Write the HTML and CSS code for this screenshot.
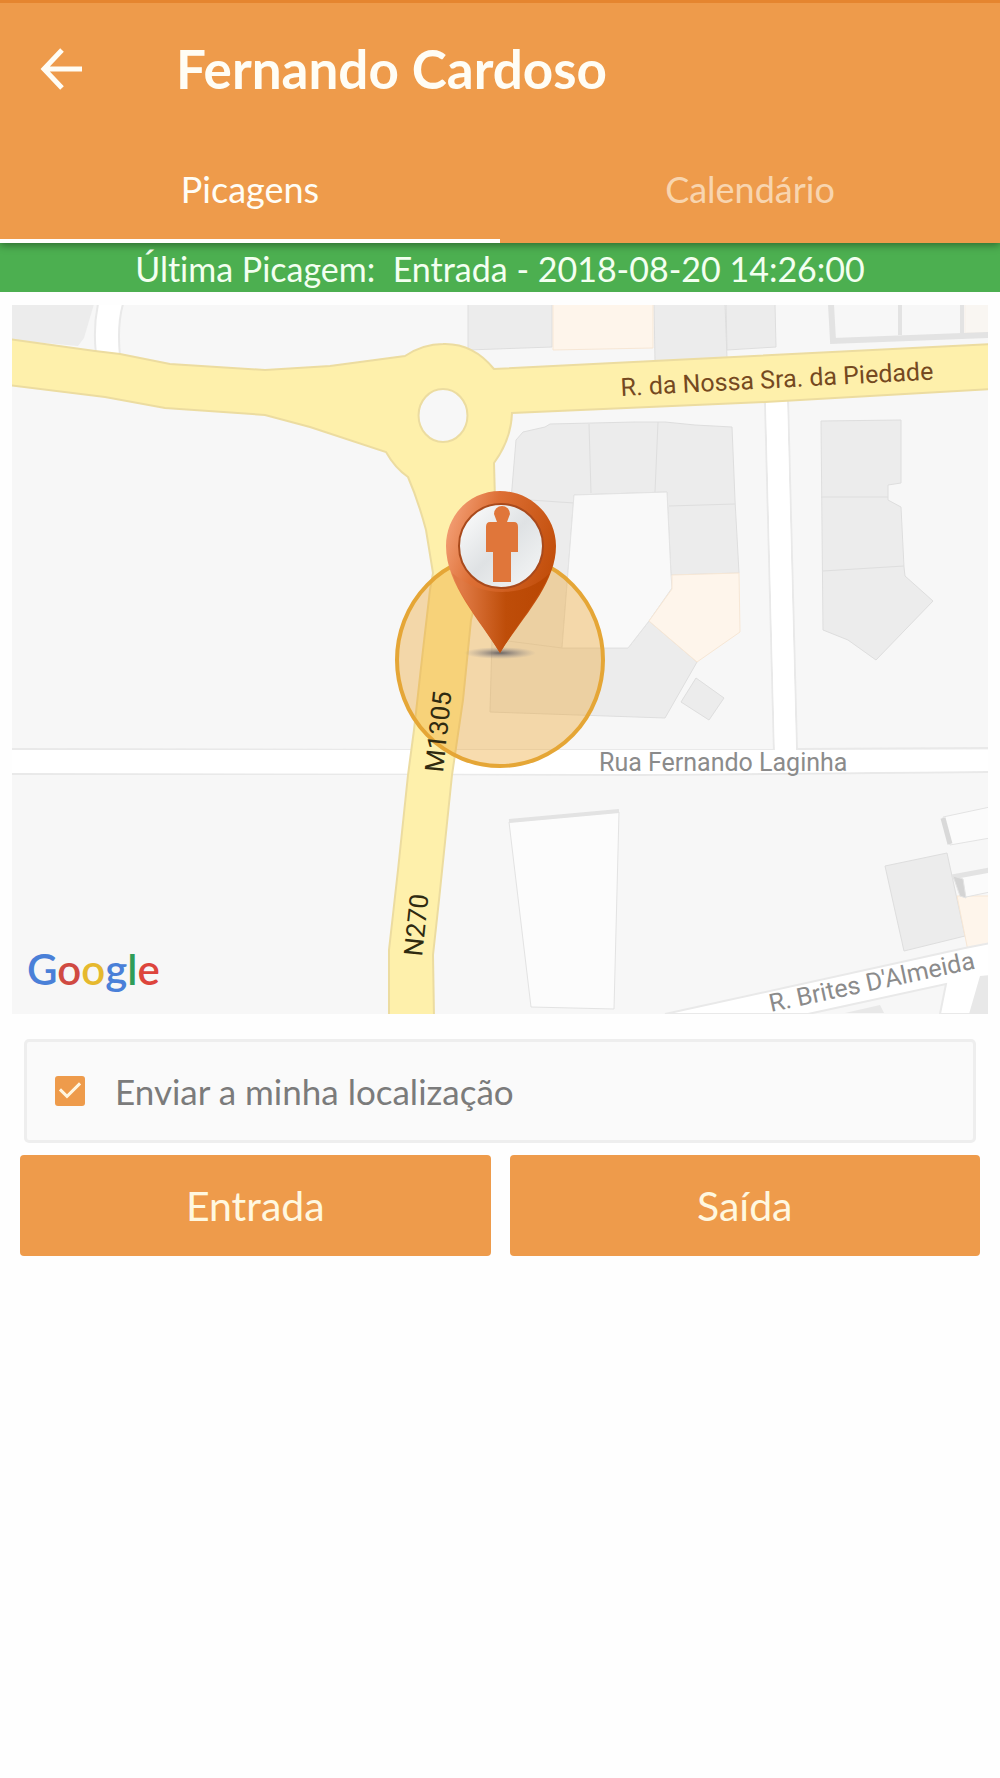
FILE: index.html
```html
<!DOCTYPE html>
<html lang="pt">
<head>
<meta charset="utf-8">
<meta name="viewport" content="width=device-width, initial-scale=1">
<title>Fernando Cardoso</title>
<link rel="stylesheet" href="styles.css">
</head>
<body>
<header class="app-header">
  <div class="title-bar">
    <button class="back" type="button" aria-label="Voltar">
      <svg viewBox="0 0 44 44" fill="none" stroke="currentColor" stroke-width="5"><path d="M42 22H5M22 3 4 22l18 19"/></svg>
    </button>
    <h1 class="title">Fernando Cardoso</h1>
  </div>
  <nav class="tabs">
    <a class="tab tab-active" href="#picagens">Picagens</a>
    <a class="tab" href="#calendario">Calendário</a>
  </nav>
</header>
<main id="picagens">
  <p class="status">Última Picagem:&nbsp; Entrada - 2018-08-20 14:26:00</p>
  <section class="map">
    <svg class="map-canvas" viewBox="12 305 976 709" role="img" aria-label="Mapa">
      <defs>
        <linearGradient id="rim" x1="0" y1="0" x2="1" y2="0.5">
          <stop offset="0" stop-color="#f9ab86"/><stop offset="0.4" stop-color="#dd6f35"/><stop offset="1" stop-color="#c04c08"/>
        </linearGradient>
        <linearGradient id="cone" x1="0" y1="0" x2="1" y2="0">
          <stop offset="0.1" stop-color="#e07a45"/><stop offset="0.55" stop-color="#be4d09"/><stop offset="1" stop-color="#b94602"/>
        </linearGradient>
        <linearGradient id="glass" x1="0" y1="0" x2="1" y2="1">
          <stop offset="0" stop-color="#ffffff"/><stop offset="0.5" stop-color="#dfe2e4"/><stop offset="1" stop-color="#f7f8f8"/>
        </linearGradient>
        <radialGradient id="shade">
          <stop offset="0" stop-color="#4b4a55" stop-opacity="0.8"/><stop offset="1" stop-color="#8a8a95" stop-opacity="0"/>
        </radialGradient>
      </defs>
      <rect x="12" y="305" width="976" height="709" fill="#f7f7f7"/>

      <g class="building">
        <path d="M12 304H94L84 338 78 346 12 340Z" stroke="none"/>
        <path d="M468 304H552V347L468 350Z"/>
        <path d="M654 304H725L727 358 655 361Z"/>
        <path d="M726 304H775L776 347 727 350Z"/>
        <path d="M516 440 523 432 545 427 550 424 635 422 665 422 695 425 732 427 735 500 739 573 671 575 667 492 574 495 562 648 628 648 649 621 697 662 665 718 490 712 492 640 506 560Z"/>
        <path d="M589 424 591 493M658 422 655 492M669 506 735 504M530 500 574 503M500 640 562 648" fill="none"/>
        <path d="M696 678 724 698 709 720 681 702Z"/>
        <path d="M821 421 901 420V483L888 485V500L901 507 904 567 905 576 933 601 876 660 848 640 823 630Z"/>
        <path d="M821 497H888M823 571 904 566" fill="none"/>
        <path d="M885 866 947 853 965 936 904 951Z"/>
      </g>
      <path d="M574 495 667 492 671 575 672 588 649 621 628 648H562Z" fill="#f9f9f9" stroke="#e3e3e3"/>
      <g class="shop">
        <path d="M553 304H653V348L553 350Z"/>
        <path d="M672 575 739 573 740 632 697 662 649 621 672 589Z"/>
        <path d="M957 896 990 896 990 951 969 956Z"/>
        <path d="M965 304H990V333H965Z" opacity="0.4"/>
      </g>
      <g fill="none" stroke="#e3e3e3">
        <path d="M831 304 833 341 990 335" stroke-width="6"/>
        <path d="M900 304V335M962 304V333" stroke-width="4"/>
      </g>
      <g fill="#fbfbfb" stroke="#e3e3e3">
        <path d="M509 822 619 812 614 1009 531 1007Z" fill="#fcfcfc"/>
        <path d="M509 821 619 811" stroke-width="4"/>
        <path d="M943 817 990 807V838L950 845Z"/>
        <path d="M943 818 950 844" stroke="#d9d9d9" stroke-width="5"/>
        <path d="M952 876 990 869V892L966 897Z"/>
        <path d="M952 877 990 870" stroke-width="5"/>
        <path d="M953 876 963 879 966 898 960 896Z" fill="#d4d4d4"/>
      </g>

      <g class="street">
        <path d="M98 304Q93 328 96 354L120 356Q117 325 123 304Z"/>
        <path d="M765 400 774 752H797L788 400Z"/>
        <path d="M665 1014 965 948 990 943V1014H940L946 984 808 1014Z"/>
        <path d="M10 749 412 750 774 750M797 749 990 748M10 774 412 774 640 775 990 772"/>
      </g>
      <path d="M10 750H990V771L640 774 10 773Z" fill="#fff"/>
      <path d="M766 400 775 753H796L787 400Z" fill="#fff"/>
      <path d="M969 955 990 950V974L978 976Z" fill="#fff"/>
      <path d="M980 976 990 975V1014H969Z" fill="#e8e8e8"/>
      <path d="M845 1013 880 1005 884 1013Z" fill="#e8e8e8"/>

      <path class="main-road" fill-rule="evenodd" d="M8 339 95 351 120 354 170 364 265 370 330 366 405 356Q423 344 443 344 473 343 494 369L992 344V389L765 402 512 413Q511 440 494 463L495 500 488 550 471 620 463 700 452 775 439 900 433 955 434 1018H389V950L398 870 408 775 414 730 423 650 430 590 433 573 426 530Q418 500 408 477 395 468 386 452L310 427 265 415 165 408 105 397 8 385ZM443 389A24 26 0 1 0 443 442 24 26 0 1 0 443 389Z"/>

      <g class="label">
        <text class="label-main" transform="translate(621 396) rotate(-3)">R. da Nossa Sra. da Piedade</text>
        <text x="599" y="771">Rua Fernando Laginha</text>
        <text transform="translate(771 1012) rotate(-12)">R. Brites D'Almeida</text>
        <text class="label-road" transform="translate(422 957) rotate(-84)">N270</text>
      </g>
      <ellipse cx="500" cy="660" rx="103" ry="106" fill="#eda022" fill-opacity="0.37" stroke="#e5a636" stroke-width="4"/>
      <text class="label label-road" transform="translate(443 773) rotate(-84)">M1305</text>

      <ellipse cx="500" cy="653" rx="36" ry="6" fill="url(#shade)"/>
      <path d="M500 491C530 491 556 515 556 546 556 585 520 620 500 653 480 620 446 585 446 546 446 515 470 491 500 491Z" fill="url(#rim)"/>
      <path d="M452 573Q475 592 502 592 530 592 550 573C537 602 516 626 500 653 484 626 463 602 452 573Z" fill="url(#cone)"/>
      <circle cx="501" cy="546" r="42" fill="url(#glass)" stroke="#a94a1c" stroke-width="2"/>
      <path d="M494 514A8 8 0 0 1 510 514L507 522H514Q518 522 518 527V552H511V582H493V552H486V527Q486 522 490 522H497Z" fill="#e0763a"/>

      <text class="logo" x="27" y="985"><tspan fill="#4a80d8">G</tspan><tspan fill="#d04a42">o</tspan><tspan fill="#e6b92e">o</tspan><tspan fill="#4a80d8">g</tspan><tspan fill="#2f9d58">l</tspan><tspan fill="#dd453c">e</tspan></text>
    </svg>
  </section>
  <form class="controls">
    <label class="consent">
      <input class="tick" type="checkbox" checked>
      <span>Enviar a minha localização</span>
    </label>
    <div class="actions">
      <button class="action" type="button">Entrada</button>
      <button class="action" type="button">Saída</button>
    </div>
  </form>
</main>
</body>
</html>
```
FILE: styles.css
```css
* { box-sizing: border-box; }

body {
  margin: 0;
  background: #fefefe;
  font-family: Lato, "Noto Sans", sans-serif;
  font-size: 36px;
  font-variant-ligatures: none;
  line-height: 44px;
}

.app-header {
  position: relative;
  background: #ee9b4b;
  border-top: 3px solid #e5852f;
  color: #fffdf5;
  box-shadow: 0 2px 8px rgba(0, 0, 0, 0.4);
}

.title-bar {
  display: flex;
  align-items: center;
  height: 132px;
  padding: 0 40px;
  gap: 92px;
}

.back {
  width: 44px;
  height: 44px;
  padding: 0;
  border: 0;
  background: none;
  color: inherit;
}

.back svg { display: block; }

.title {
  margin: 0;
  font-size: 53px;
  line-height: 64px;
  font-weight: 700;
}

.tabs { display: grid; grid-template-columns: 1fr 1fr; }

.tab {
  height: 108px;
  padding-top: 32px;
  border-bottom: 4px solid transparent;
  color: rgba(255, 253, 245, 0.6);
  text-align: center;
  text-decoration: none;
}

.tab-active {
  color: #fffdf5;
  border-color: #fff;
}

.status {
  margin: 0;
  padding: 4px 0 1px;
  background: #4caf50;
  color: #f3fff0;
  font-size: 34px;
  text-align: center;
}

.map { padding: 13px 12px 0; }

.map-canvas {
  display: block;
  width: 100%;
}

.building { fill: #ececec; stroke: #dedede; }
.shop { fill: #fef5eb; stroke: #f7e7d5; }
.street { fill: #fff; stroke: #e9e9e9; stroke-width: 2px; }
.main-road { fill: #fef0ab; stroke: #ecdca0; stroke-width: 2px; }

.label {
  font-family: Roboto, sans-serif;
  font-size: 25px;
  fill: #8b8b8b;
}

.label-main { fill: #75491f; }
.label-road { font-size: 26px; fill: #2f2a10; }

.logo {
  font-family: Lato, sans-serif;
  font-size: 42px;
  font-weight: 600;
}

.controls { padding: 25px 20px 0; }

.consent {
  display: flex;
  align-items: center;
  gap: 30px;
  height: 104px;
  margin: 0 4px 12px;
  padding: 0 28px;
  border: 3px solid #eee;
  border-radius: 5px;
  background: #fafafa;
  color: #7b7b7b;
  font-size: 35px;
}

.tick {
  appearance: none;
  width: 30px;
  height: 30px;
  margin: 0;
  border-radius: 3px;
  background: #ee9b4b;
}

.tick:checked::before {
  content: "";
  display: block;
  height: 100%;
  background: #fff6e0;
  clip-path: polygon(13% 48%, 20% 41%, 40% 61%, 80% 21%, 87% 28%, 40% 75%);
}

.actions {
  display: grid;
  grid-template-columns: 1fr 1fr;
  gap: 19px;
}

.action {
  height: 101px;
  padding: 0;
  border: 0;
  border-radius: 4px;
  background: #ee9b4b;
  color: #fff8e0;
  font: inherit;
  font-size: 41px;
}
```
